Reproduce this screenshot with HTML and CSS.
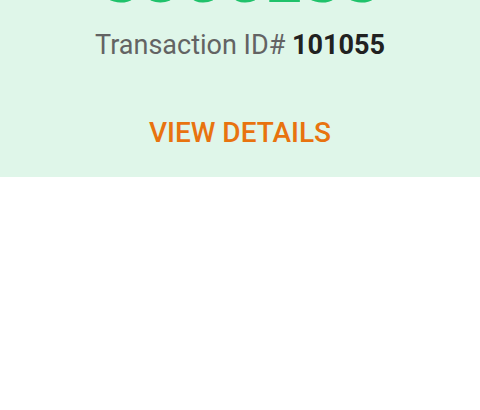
FILE: index.html
```html
<!DOCTYPE html>
<html lang="en">
<head>
  <meta charset="UTF-8" />
  <meta name="viewport" content="width=device-width, initial-scale=1.0"/>
  <title>Payment Status</title>
  <link rel="stylesheet" href="styles.css">
</head>
<body>
  <div class="result-panel">
    <div class="status">SUCCESS</div>
    <div class="txn">Transaction ID# <span class="txn-id">101055</span></div>
    <div class="details">VIEW DETAILS</div>
  </div>
</body>
</html>
```

FILE: styles.css
```css
body {
  margin: 0;
  background-color: #ffffff;
  font-family: Roboto, "Liberation Sans", sans-serif;
  overflow: hidden;
}

.result-panel {
  background-color: #dff6e9;
  text-align: center;
  padding-bottom: 27px;
}

.status {
  font-size: 64px;
  line-height: 64px;
  font-weight: bold;
  color: #20c26b;
  margin-top: -51px;
}

.txn {
  font-size: 27px;
  line-height: 32px;
  color: #636363;
  margin-top: 16px;
}

.txn-id {
  font-weight: bold;
  color: #212121;
}

.details {
  font-size: 28px;
  line-height: 34px;
  font-weight: 500;
  color: #e8730f;
  margin-top: 55px;
}
```
